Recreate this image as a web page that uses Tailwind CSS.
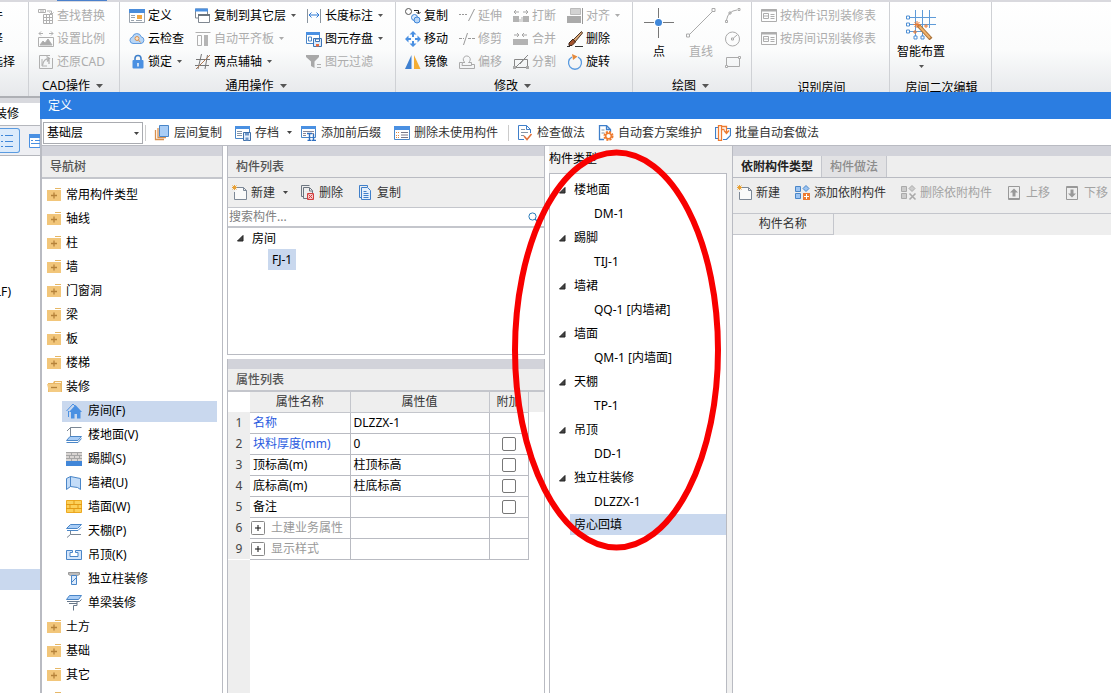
<!DOCTYPE html>
<html lang="zh-CN">
<head>
<meta charset="utf-8">
<title>定义</title>
<script src="https://cdn.jsdelivr.net/npm/@tailwindcss/browser@4"></script>
</head>
<body class="relative flex h-screen flex-col overflow-hidden bg-white font-['Noto_Sans','Noto_Sans_CJK_SC',sans-serif] text-xs leading-5 text-black">

<svg class="hidden" aria-hidden="true">
  <symbol id="caret" viewBox="0 0 7 4"><path d="M0 0h7L3.500 4z" fill="currentColor"/></symbol>
  <symbol id="tri" viewBox="0 0 7 7"><path d="M6 .5V6H.5z" fill="#444" stroke="#222"/></symbol>
  <symbol id="find" viewBox="0 0 16 16" fill="none" stroke="#b0b0b0"><path d="M.5 1.500h7v3h-7zM3 1.500v3M5 1.500v3M9 3h4.500v3M11.500 4.500l2 2 2-2M5.500 6.500h9v9h-9zM5.500 9.500h9M5.500 12.500h9M8.500 7v8M11.500 7v8"/></symbol>
  <symbol id="scale" viewBox="0 0 16 16" fill="none" stroke="#b0b0b0"><path d="M1 2.500h4M3 .5l-2 2 2 2M11 2.500h4M13 .5l2 2-2 2M.5 6.500h15v9H.5z"/><path d="M2 14l3-4 2 2 3-4 4 6z" fill="#aaa"/></symbol>
  <symbol id="restore" viewBox="0 0 16 16" fill="none" stroke="#b0b0b0"><path d="M12 1.500H1.500v13h13V4M4 5v7h5" /><path d="M4.500 11.500C5 7 8 4.500 11 4.500M8.500 2.500L11.500 4.500 9 7.500M11 5v5" stroke-width="1.300"/></symbol>
  <symbol id="define" viewBox="0 0 16 16"><path d="M.5 1.500h15v13H.5z" fill="#fff" stroke="#9aa3ad"/><path d="M0 1h16v4H0z" fill="#4a8ddb"/><path d="M2 7.500h4M2 9.500h4M2 12.500h3M7 12.500h6" stroke="#9aa3ad"/><path d="M8 7h5v4H8z" fill="#f3a73f"/></symbol>
  <symbol id="cloud" viewBox="0 0 16 16"><path d="M4 12.500a3.300 3.300 0 0 1-.5-6.500 4.500 4.500 0 0 1 8.700-.2A3.400 3.400 0 0 1 12 12.500z" fill="#b9d6f5" stroke="#5f9be0"/><circle cx="8" cy="7.500" r="2" fill="#fbe3c8" stroke="#d9904e"/><path d="M9.500 9l2 2.500" stroke="#d9904e"/></symbol>
  <symbol id="lock" viewBox="0 0 16 16"><path d="M6 7V4.500a3 3 0 0 1 6 0V7" fill="none" stroke="#3e7fca" stroke-width="1.600"/><rect x="3.500" y="6" width="11" height="8.500" rx="1" fill="#4a90e2"/><path d="M8.300 9h1.400v3.500H8.300z" fill="#fff"/></symbol>
  <symbol id="copyfloor" viewBox="0 0 16 16"><path d="M.5 1h12v9H.5z" fill="#fff" stroke="#7f8790"/><path d="M0 .5h13v3H0z" fill="#4a90e2"/><path d="M3.500 6.500h11v8h-11z" fill="#fff" stroke="#7f8790"/><path d="M3 6h12v2H3z" fill="#6a747e"/></symbol>
  <symbol id="slab" viewBox="0 0 16 16"><path d="M.5 1.500h15M2.500 4.500h4v10h-4z" fill="none" stroke="#b0b0b0"/><path d="M9 4h4v11H9z" fill="#b5b5b5"/></symbol>
  <symbol id="axis" viewBox="0 0 16 16" fill="none"><path d="M1 5.500h14M0 11.500h14M6.500 0L3 15M12.500 1L10 15" stroke="#777"/><path d="M1 15L15 1" stroke="#b07a56"/></symbol>
  <symbol id="dim" viewBox="0 0 16 16" fill="none"><path d="M1.500 1v14M14.500 1v14" stroke="#8a949e"/><path d="M3 7h10M5.500 4.500L3 7l2.500 2.500M10.500 4.500L13 7l-2.500 2.500" stroke="#2f7ad6"/></symbol>
  <symbol id="save" viewBox="0 0 16 16"><path d="M.5 1.500h13v11H.5z" fill="#fff" stroke="#4a86c8"/><path d="M0 1h14v3H0z" fill="#4a90e2"/><path d="M2.500 6h3v4h-3z" fill="none" stroke="#4a86c8"/><path d="M7.500 7.500h8v8h-8z" fill="#dceafb" stroke="#3c74b5"/><path d="M9.500 8h4v2.500h-4z" fill="#fff" stroke="#3c74b5"/><path d="M10 13h3v2.500h-3z" fill="#ea6b3a"/></symbol>
  <symbol id="filter" viewBox="0 0 16 16"><path d="M0 1h13v2L8.500 7.500V14L5 12V7.500L0 3z" fill="#a8a8a8"/><path d="M11 10.500h4M11 13.500h4" stroke="#b0b0b0"/></symbol>
  <symbol id="copy2" viewBox="0 0 16 16" fill="none"><circle cx="3.500" cy="3.500" r="3" stroke="#555"/><path d="M9 2.500h4.500v3M11.500 4l2 2 2-2" stroke="#222"/><circle cx="9.500" cy="9.500" r="3" fill="#dbeafb" stroke="#3c84d8"/><circle cx="12" cy="12" r="3" fill="#b8d6f7" stroke="#3c84d8"/></symbol>
  <symbol id="move" viewBox="0 0 16 16"><path d="M8 0l3.500 3.500H9V6H7V3.500H4.500zM8 16l-3.500-3.500H7V10h2v2.500h2.500zM0 8l3.500-3.500V7H6v2H3.500v2.500zM16 8l-3.500 3.500V9H10V7h2.500V4.500z" fill="#4a90e2"/></symbol>
  <symbol id="mirror" viewBox="0 0 16 16"><path d="M6.500 1v14H0z" fill="#3f80d0"/><path d="M9 1v14h6.500z" fill="#f5ad32"/></symbol>
  <symbol id="extend" viewBox="0 0 16 16" fill="none" stroke="#999"><path d="M0 6.500h9" stroke-dasharray="2 1"/><path d="M15.500 1L9.500 13"/></symbol>
  <symbol id="trim" viewBox="0 0 16 16" fill="none" stroke="#999"><path d="M0 7.500h5M9 7.500h7" stroke-dasharray="3 1"/><path d="M8.500 2L4.500 14"/></symbol>
  <symbol id="offset" viewBox="0 0 16 16" fill="none" stroke="#aaa"><path d="M3.500 8.500H.5v6h15v-4h-3M3 11.500h9.500v-3h-3A3.500 3.500 0 1 0 6 8.500H3.500z"/></symbol>
  <symbol id="break" viewBox="0 0 16 16"><path d="M0 8h6v6H0zM10 8h6v6h-6zM6.500 11h1v3h-1zM8.500 9h1v5h-1z" fill="#b3b3b3"/><path d="M1 4h5M3 2L1 4l2 2M10 4h5M13 2l2 2-2 2" fill="none" stroke="#a5a5a5"/></symbol>
  <symbol id="merge" viewBox="0 0 16 16"><path d="M0 8h15v6H0z" fill="#b3b3b3"/><path d="M1 4h5M4 2l2 2-2 2M9 4h5M11 2L9 4l2 2" fill="none" stroke="#a5a5a5"/></symbol>
  <symbol id="split" viewBox="0 0 16 16" fill="none" stroke="#888"><path d="M1.500 5.500h13v8h-13zM3 13L15 1M7 10l6-7"/><path d="M0 12h3v3H0zM13 12h3v3h-3z" fill="#aaa" stroke="none"/></symbol>
  <symbol id="align" viewBox="0 0 16 16"><path d="M3.500.5h10v6h-10z" fill="#d2d2d2" stroke="#bbb"/><path d="M0 8h14v7H0z" fill="#aaa"/><path d="M15.500 0v16" stroke="#999"/></symbol>
  <symbol id="brush" viewBox="0 0 16 16"><path d="M14.500.5L6 9l2 2 7.500-9z" fill="#d8a777" stroke="#4d3526"/><path d="M6 8L2 12v2.500h3L8.500 11z" fill="#a3542e" stroke="#3c2418"/><path d="M0 15.500h3M8 15.500h8" stroke="#333"/></symbol>
  <symbol id="rotate" viewBox="0 0 16 16"><path d="M5 3a6.500 6.500 0 1 0 6 0" fill="none" stroke="#5a9be0" stroke-width="1.300"/><path d="M5 0l5.500 2.500L6 6z" fill="#e38a3e"/></symbol>
  <symbol id="point" viewBox="0 0 30 30"><path d="M14.500 0v30M0 14.500h30" stroke="#777"/><circle cx="14.500" cy="14.500" r="4.500" fill="#fff"/><circle cx="14.500" cy="14.500" r="3.500" fill="#3f87d9"/></symbol>
  <symbol id="line" viewBox="0 0 30 30" fill="none" stroke="#aaa"><path d="M3.500 26.500L26 4M.5 26h3v3h-3zM26 .5h3v3h-3z"/></symbol>
  <symbol id="arc" viewBox="0 0 16 16" fill="none" stroke="#aaa"><path d="M1.500 12Q3 3 12 2M.5 12.500h2v2h-2zM13 .5h2v2h-2zM4 4h2v2H4z"/></symbol>
  <symbol id="circle" viewBox="0 0 16 16" fill="none" stroke="#aaa"><circle cx="7.500" cy="8" r="7"/><path d="M8.500 7L12 4M6.500 7h2v2h-2z"/></symbol>
  <symbol id="rect" viewBox="0 0 16 16" fill="none" stroke="#aaa"><path d="M1.500 3.500h13v9h-13z"/><path d="M.5 11.500h2v2h-2zM13.500 2.500h2v2h-2z" fill="#fff"/></symbol>
  <symbol id="card" viewBox="0 0 16 16" fill="none" stroke="#adadad"><path d="M.5 1.500h15v12H.5z"/><path d="M0 2.500h16" stroke-width="2"/><path d="M2.500 5.500h5v5h-5zM3 8h4M9.500 6.500h4M9.500 8.500h4M9.500 10.500h4"/></symbol>
  <symbol id="smart" viewBox="0 0 30 30" fill="none"><path d="M9.500 0v29M16.500 0v29M23.500 0v18M3 7.500h27M3 14.500h27M3 21.500h15" stroke="#5f9bd8"/><path d="M.5 6h3v3h-3zM.5 13h3v3h-3zM.5 20h3v3h-3zM8 26h3v3H8zM15 26h3v3h-3z" fill="#fff" stroke="#4e8fd4"/><path d="M12 15l13 14" stroke="#a97137" stroke-width="4"/><path d="M13 16l11 12" stroke="#f0b26c" stroke-width="2"/><path d="M11 11v7M7.500 14.500h7M8.500 12l5 5M13.500 12l-5 5M9 20v4M7 22h4M20 14v4M18 16h4" stroke="#e97b34"/></symbol>

  <symbol id="layers" viewBox="0 0 16 16"><path d="M1.500 5v9.500H10M4 3v9.500h8" fill="none" stroke="#d9904e" stroke-width="1.300"/><path d="M5.500.5h9v11h-9z" fill="#a9cdf6" stroke="#4a86c8"/></symbol>
  <symbol id="archive" viewBox="0 0 16 16"><path d="M.5 1.500h14v12H.5z" fill="#fff" stroke="#4a86c8"/><path d="M0 1h15v3H0z" fill="#4a90e2"/><path d="M2 6.500h5M2 8.500h5M2 10.500h5" stroke="#8494a6"/><path d="M8.500 7.500h7v8h-7z" fill="#e4effc" stroke="#3f6fa8"/><path d="M10 8h4v2.500h-4zM10.500 12.500h3v3h-3z" fill="#6f97c9"/></symbol>
  <symbol id="affix" viewBox="0 0 16 16"><path d="M.5 1.500h14v11H.5z" fill="#fff" stroke="#4a86c8"/><path d="M0 1h15v3H0z" fill="#4a90e2"/><path d="M2 6.500h11M2 8.500h3M11 8.500h2M2 10.500h3" stroke="#889"/><path d="M6 8.500h5M8.500 8v7M6.500 15.500h4M12.500 9v6M11 15.500h4" stroke="#2f6fc0" stroke-width="1.400"/></symbol>
  <symbol id="unused" viewBox="0 0 16 16"><path d="M.5 1.500h15v13H.5z" fill="#fff" stroke="#4a86c8"/><path d="M0 1h16v4H0z" fill="#4a90e2"/><path d="M2 7.500h3M2 10.500h3M2 12.500h3" stroke="#e38a3e" stroke-dasharray="1 1"/><path d="M7 7.500h7M7 10h7M7 12.500h7" stroke="#778"/></symbol>
  <symbol id="check" viewBox="0 0 16 16" fill="none"><path d="M13.500 8V4.500l-4-4h-8v14H7M9.500.5v4h4" stroke="#3f7fca"/><path d="M4 4.500h4M4 7.500h7M4 10.500h3" stroke="#8494a6"/><path d="M7 11l3 3.500L14.500 9" stroke="#e0703a" stroke-width="1.500"/></symbol>
  <symbol id="gear" viewBox="0 0 16 16" fill="none"><path d="M12.500 7V4.500l-4-4h-7v14H6M8.500.5v4h4" stroke="#3f7fca" stroke-width="1.300"/><path d="M3.500 5h3M3.500 8h3" stroke="#8494a6"/><circle cx="10.500" cy="11" r="4" stroke="#ee7b30" stroke-width="2" stroke-dasharray="2 1.140"/><circle cx="10.500" cy="11" r="2.800" stroke="#ee7b30" stroke-width="1.500"/></symbol>
  <symbol id="batch" viewBox="0 0 16 16" fill="none"><path d="M3 2.500H.5v11h3M12 3.500h3.500v7l-4 4H8" stroke="#3f7fca" stroke-width="1.200"/><path d="M3.500.5h3v15h-3zM6.500 1.500h5v6M9 5.500l2.500 3 2.500-3M6.500 12V4.500h3" stroke="#ee7b30" stroke-width="1.300"/></symbol>
  <symbol id="new" viewBox="0 0 16 16" fill="none"><path d="M5 2.500h6.500l3 3v9h-12V7M11.500 2.500v3h3" fill="#fafafa" stroke="#7d8896"/><path d="M0 2.500h5M2.500 0v5M.5.5l4 4M4.500.5l-4 4" stroke="#e8a136"/></symbol>
  <symbol id="del" viewBox="0 0 16 16" fill="none"><path d="M3 11.500H1.500V.5h8M7 13.500H3.500v-11h6l3 3V8M9.500 3v3h3" stroke="#6d7681"/><path d="M7.500 8.500h6v6h-6z" fill="#f6c9c9" stroke="#d23f3f"/><path d="M8.500 9.500l4 4M12.500 9.500l-4 4" stroke="#d23f3f"/></symbol>
  <symbol id="dup" viewBox="0 0 16 16" fill="none" stroke="#3f7fca"><path d="M3 12.500H1.500V.5h8V2"/><path d="M3.500 2.500h6l3 3v9h-9z" fill="#e4effc"/><path d="M5.500 6.500h3M5.500 8.500h5M5.500 10.500h5M5.500 12.500h5"/></symbol>
  <symbol id="addc" viewBox="0 0 16 16"><path d="M.5 1.500h5v5h-5zM.5 8.500h5v5h-5zM11 .5L14 3.500l-3 3-3-3z" fill="#9cc4f2" stroke="#4a86c8"/><path d="M8 8h7v7H8z" fill="#ee7b30"/><path d="M11.500 9v5M9 11.500h5" stroke="#fff"/></symbol>
  <symbol id="delc" viewBox="0 0 16 16"><path d="M.5 1.500h5v5h-5zM.5 8.500h5v5h-5zM11 .5L14 3.500l-3 3-3-3z" fill="#ccc" stroke="#aaa"/><path d="M8.500 8.500l6 6M14.500 8.500l-6 6" stroke="#aaa" stroke-width="1.600"/></symbol>
  <symbol id="up" viewBox="0 0 14 16"><path d="M1.500 1.500h11v13h-11zM1 13.500h12" fill="none" stroke="#999"/><path d="M7 3.500l4 4H8.500v4h-3v-4H3z" fill="#999"/></symbol>
  <symbol id="down" viewBox="0 0 14 16"><path d="M1.500 1.500h11v13h-11zM1 2.500h12" fill="none" stroke="#999"/><path d="M7 12.500l4-4H8.500v-4h-3v4H3z" fill="#999"/></symbol>
  <symbol id="search" viewBox="0 0 10 10" fill="none" stroke="#2b7bb9"><circle cx="4.500" cy="4.500" r="3.600"/><path d="M7 7l2.500 2.500" stroke-width="1.300"/></symbol>

  <symbol id="folder" viewBox="0 0 16 14"><path d="M8 0h6v1H8z" fill="#e6b766"/><path d="M0 2h14v11H0z" fill="#f2c67a"/><path d="M4 7.500h6M7 4.500v6" stroke="#b5823a" stroke-width="1.300"/></symbol>
  <symbol id="open" viewBox="0 0 16 14"><path d="M1 12V3h5l1-2h8v11z" fill="#e9b765"/><path d="M8 2h6v1H8z" fill="#fff3da"/><path d="M0 4h13l1 8H2z" fill="#f4cb83"/><path d="M4 7.500h6" stroke="#b5823a" stroke-width="1.300"/></symbol>
  <symbol id="house" viewBox="0 0 16 16"><path d="M.5 8L7 1l2 2M2.500 8v6" fill="none" stroke="#4a90e2"/><path d="M9.500 2L16 9h-1.500v6.500h-3.500V11H8.500v4.500H5V9H3z" fill="#4a90e2"/></symbol>
  <symbol id="floor" viewBox="0 0 16 16"><path d="M4.500 9V.500h11M4.500 .5L1 4" fill="none" stroke="#7b8794"/><path d="M4 9.500h11.500L12 13.500H.5z" fill="#a9cdf6" stroke="#4a86c8"/><path d="M.5 15.500H12l3.500-4" fill="none" stroke="#4a86c8"/></symbol>
  <symbol id="skirt" viewBox="0 0 16 16"><path d="M0 1h16v9H0z" fill="#d8d4d2"/><path d="M0 1.500h16M0 4.500h16M0 7.500h16M5.500 1v3M11.500 1v3M3.500 4v3M8.500 4v3M13.500 4v3M5.500 8v3M11.500 8v3" stroke="#a5a5a5"/><path d="M0 10h16v5H0z" fill="#4186d8"/></symbol>
  <symbol id="dado" viewBox="0 0 16 16"><path d="M.5 3.500L4.500 1.500v10l-4 3zM4.500 1.500l10 2v11l-3-2-7-1z" fill="#c3dcf8" stroke="#4a86c8"/></symbol>
  <symbol id="brick" viewBox="0 0 16 16"><path d="M.5 1.500h15v12H.5z" fill="#fcd05a" stroke="#eda921"/><path d="M0 5.500h16M0 9.500h16M8 1.500v4M4 5.500v4M12 5.500v4M8 9.500v4" stroke="#e39a14"/></symbol>
  <symbol id="ceil" viewBox="0 0 16 16"><path d="M4.500 1.500h11l-4 4H.5z" fill="#a9cdf6" stroke="#4a86c8"/><path d="M1 7.500h11l3-3" fill="none" stroke="#4a86c8"/><path d="M4.500 8v3.500L1 14.500M4.500 11.500H15" fill="none" stroke="#7b8794"/></symbol>
  <symbol id="susp" viewBox="0 0 16 16"><path d="M.5 3.500h6v2H4v4h8v-4H9.500v-2h6v9H.5z" fill="#d5e6fb" stroke="#4a86c8"/></symbol>
  <symbol id="pillar" viewBox="0 0 16 16"><path d="M2.500 1.500h11v2l-2 1h-7l-2-1z" fill="#bbb" stroke="#999"/><path d="M5.500 4.500h5v9h-5z" fill="#dceafb" stroke="#4a86c8"/><path d="M6 11l4-4" stroke="#4a86c8"/></symbol>
  <symbol id="beam" viewBox="0 0 16 16"><path d="M3.500.5h12l-3 4H.5z" fill="#a9cdf6" stroke="#4a86c8"/><path d="M1 6.500h12.500l2-2M3 8.500h8M11 6.500v4H7.500v5" fill="none" stroke="#68788a"/></symbol>
</svg>

<!-- Main window ribbon -->
<header class="flex h-[98px] shrink-0 border-t-2 border-b-2 border-t-[#d9d9de] border-b-[#aeb0b5] bg-linear-to-b from-white via-[#fbfcfc] to-[#e6e8eb] whitespace-nowrap">
  <div class="absolute top-0 left-[57px] h-px w-[50px] bg-[#4a80cc]"></div>
  <section class="w-[29px] shrink-0 overflow-hidden border-r border-[#cfd1d5] pt-[2px]">
    <button class="flex h-[23px] w-[3px] items-center justify-end">构件</button>
    <button class="flex h-[23px] w-[3px] items-center justify-end">选择</button>
    <button class="flex h-[23px] w-[15px] items-center justify-end">选择</button>
  </section>
  <section class="w-[91px] shrink-0 border-r border-[#cfd1d5] pt-[2px] pl-[9px] text-[#acacac]">
    <button class="flex h-[23px] items-center gap-[3px]"><svg class="size-4"><use href="#find"/></svg>查找替换</button>
    <button class="flex h-[23px] items-center gap-[3px]"><svg class="size-4"><use href="#scale"/></svg>设置比例</button>
    <button class="flex h-[23px] items-center gap-[3px]"><svg class="size-4"><use href="#restore"/></svg>还原CAD</button>
    <button class="mt-px flex h-[23px] items-center gap-[6px] pl-1 text-black">CAD操作<svg class="h-1 w-[7px] text-[#555]"><use href="#caret"/></svg></button>
  </section>
  <section class="w-[276px] shrink-0 border-r border-[#cfd1d5] pt-[2px] pl-[9px]">
    <div class="grid grid-cols-[66px_111px_auto]">
      <button class="flex h-[23px] items-center gap-[3px]"><svg class="size-4"><use href="#define"/></svg>定义</button>
      <button class="flex h-[23px] items-center gap-[3px]"><svg class="size-4"><use href="#copyfloor"/></svg>复制到其它层<svg class="ml-[2px] h-[3px] w-[5px] text-[#555]"><use href="#caret"/></svg></button>
      <button class="flex h-[23px] items-center gap-[3px]"><svg class="size-4"><use href="#dim"/></svg>长度标注<svg class="ml-[2px] h-[3px] w-[5px] text-[#555]"><use href="#caret"/></svg></button>
      <button class="flex h-[23px] items-center gap-[3px]"><svg class="size-4"><use href="#cloud"/></svg>云检查</button>
      <button class="flex h-[23px] items-center gap-[3px] text-[#acacac]"><svg class="size-4"><use href="#slab"/></svg>自动平齐板<svg class="ml-[2px] h-[3px] w-[5px]"><use href="#caret"/></svg></button>
      <button class="flex h-[23px] items-center gap-[3px]"><svg class="size-4"><use href="#save"/></svg>图元存盘<svg class="ml-[2px] h-[3px] w-[5px] text-[#555]"><use href="#caret"/></svg></button>
      <button class="flex h-[23px] items-center gap-[3px]"><svg class="size-4"><use href="#lock"/></svg>锁定<svg class="ml-[2px] h-[3px] w-[5px] text-[#555]"><use href="#caret"/></svg></button>
      <button class="flex h-[23px] items-center gap-[3px]"><svg class="size-4"><use href="#axis"/></svg>两点辅轴<svg class="ml-[2px] h-[3px] w-[5px] text-[#555]"><use href="#caret"/></svg></button>
      <button class="flex h-[23px] items-center gap-[3px] text-[#acacac]"><svg class="size-4"><use href="#filter"/></svg>图元过滤</button>
    </div>
    <div class="mt-px flex justify-center pr-3"><button class="flex h-[23px] items-center gap-[6px]">通用操作<svg class="h-1 w-[7px] text-[#555]"><use href="#caret"/></svg></button></div>
  </section>
  <section class="w-[237px] shrink-0 border-r border-[#cfd1d5] pt-[2px] pl-[9px]">
    <div class="grid grid-cols-[54px_54px_54px_auto]">
      <button class="flex h-[23px] items-center gap-[3px]"><svg class="size-4"><use href="#copy2"/></svg>复制</button>
      <button class="flex h-[23px] items-center gap-[3px] text-[#acacac]"><svg class="size-4"><use href="#extend"/></svg>延伸</button>
      <button class="flex h-[23px] items-center gap-[3px] text-[#acacac]"><svg class="size-4"><use href="#break"/></svg>打断</button>
      <button class="flex h-[23px] items-center gap-[3px] text-[#acacac]"><svg class="size-4"><use href="#align"/></svg>对齐<svg class="ml-[2px] h-[3px] w-[5px]"><use href="#caret"/></svg></button>
      <button class="flex h-[23px] items-center gap-[3px]"><svg class="size-4"><use href="#move"/></svg>移动</button>
      <button class="flex h-[23px] items-center gap-[3px] text-[#acacac]"><svg class="size-4"><use href="#trim"/></svg>修剪</button>
      <button class="flex h-[23px] items-center gap-[3px] text-[#acacac]"><svg class="size-4"><use href="#merge"/></svg>合并</button>
      <button class="flex h-[23px] items-center gap-[3px]"><svg class="size-4"><use href="#brush"/></svg>删除</button>
      <button class="flex h-[23px] items-center gap-[3px]"><svg class="size-4"><use href="#mirror"/></svg>镜像</button>
      <button class="flex h-[23px] items-center gap-[3px] text-[#acacac]"><svg class="size-4"><use href="#offset"/></svg>偏移</button>
      <button class="flex h-[23px] items-center gap-[3px] text-[#acacac]"><svg class="size-4"><use href="#split"/></svg>分割</button>
      <button class="flex h-[23px] items-center gap-[3px]"><svg class="size-4"><use href="#rotate"/></svg>旋转</button>
    </div>
    <div class="mt-px flex justify-center pr-3"><button class="flex h-[23px] items-center gap-[6px]">修改<svg class="h-1 w-[7px] text-[#555]"><use href="#caret"/></svg></button></div>
  </section>
  <section class="w-[119px] shrink-0 border-r border-[#cfd1d5] pt-[2px] pl-[11px]">
    <div class="flex h-[69px]">
      <button class="flex w-[30px] flex-col items-center gap-1 pt-1"><svg class="size-[30px]"><use href="#point"/></svg>点</button>
      <button class="ml-3 flex w-[30px] flex-col items-center gap-1 pt-1 text-[#acacac]"><svg class="size-[30px]"><use href="#line"/></svg>直线</button>
      <div class="ml-[9px] flex w-4 flex-col">
        <button class="flex h-[23px] items-center" aria-label="弧"><svg class="size-4"><use href="#arc"/></svg></button>
        <button class="flex h-[23px] items-center" aria-label="圆"><svg class="size-4"><use href="#circle"/></svg></button>
        <button class="flex h-[23px] items-center" aria-label="矩形"><svg class="size-4"><use href="#rect"/></svg></button>
      </div>
    </div>
    <button class="mt-px flex h-[23px] items-center gap-[6px] pl-7">绘图<svg class="h-1 w-[7px] text-[#555]"><use href="#caret"/></svg></button>
  </section>
  <section class="w-[138px] shrink-0 border-r border-[#cfd1d5] pt-[2px] pl-[9px]">
    <div class="h-[72px] text-[#acacac]">
      <button class="flex h-[23px] items-center gap-[3px]"><svg class="size-4"><use href="#card"/></svg>按构件识别装修表</button>
      <button class="flex h-[23px] items-center gap-[3px]"><svg class="size-4"><use href="#card"/></svg>按房间识别装修表</button>
    </div>
    <div class="h-[23px] pr-[7px] text-center leading-[23px]">识别房间</div>
  </section>
  <section class="w-[102px] shrink-0 border-r border-[#cfd1d5] pt-[2px]">
    <div class="h-[72px] pl-[7px]">
      <button class="flex flex-col items-center pt-[6px]"><svg class="size-[30px]"><use href="#smart"/></svg><span class="mt-[2px]">智能布置</span><svg class="mt-[3px] h-[3px] w-[5px] text-[#555]"><use href="#caret"/></svg></button>
    </div>
    <div class="h-[23px] pl-[2px] text-center leading-[23px]">房间二次编辑</div>
  </section>
</header>

<!-- Visible strip of the main window behind the dialog -->
<aside class="min-h-0 w-10 flex-1 overflow-hidden">
  <div class="h-[5px] bg-[#d8d9de]"></div>
  <div class="flex h-[22px] w-[19px] items-center justify-end whitespace-nowrap">装修</div>
  <div class="flex h-[31px] items-center justify-between border-y border-[#b5b7bd] bg-[#eeeff3]">
    <button class="flex h-[25px] w-5 items-center justify-end rounded-r-[3px] border border-l-0 border-[#5a9be0] bg-[#dcebfb] pr-[5px]" aria-label="列表"><svg class="h-4 w-[14px]" viewBox="0 0 14 16" fill="none" stroke="#3f87d9"><path d="M1 2.500h2M5 2.500h8M1 8.500h2M5 8.500h8M1 13.500h2M5 13.500h8"/></svg></button>
    <svg class="h-[14px] w-[11px]" viewBox="0 0 11 14"><path d="M.5.5H11v13H.5z" fill="#fff" stroke="#4a90e2"/><path d="M0 0h11v4H0zM2 6h2v1H2zM6 6h5v1H6zM2 9h9v1H2z" fill="#4a90e2"/></svg>
  </div>
  <div class="mt-[126px] flex h-5 w-[11px] items-center justify-end whitespace-nowrap">(LF)</div>
  <div class="mt-[267px] h-[21px] bg-[#c9d8ee]"></div>
</aside>

<!-- Definition dialog -->
<main class="absolute top-[92px] right-0 bottom-0 left-10 flex flex-col overflow-hidden bg-white">
  <h1 class="h-[27px] shrink-0 bg-[#2b7de1] pl-2 leading-[27px] text-white">定义</h1>
  <div class="flex h-[27px] shrink-0 items-center border-b border-l-2 border-[#b9bbc2] pt-px pl-[1px] whitespace-nowrap text-[#333]">
    <div class="relative">
      <select aria-label="楼层" class="block h-[22px] w-[100px] appearance-none border border-[#a9abb0] bg-white pl-[3px] text-xs leading-5 text-black"><option>基础层</option></select>
      <svg class="pointer-events-none absolute top-[10px] right-1 h-[3px] w-[5px] text-[#444]"><use href="#caret"/></svg>
    </div>
    <div class="ml-[2px] h-4 w-px bg-[#ccc]"></div>
    <button class="ml-2 flex items-center gap-1"><svg class="size-4"><use href="#layers"/></svg>层间复制</button>
    <button class="ml-[13px] flex items-center gap-1"><svg class="size-4"><use href="#archive"/></svg>存档<svg class="ml-1 h-[3px] w-[5px] text-[#444]"><use href="#caret"/></svg></button>
    <button class="ml-[9px] flex items-center gap-1"><svg class="size-4"><use href="#affix"/></svg>添加前后缀</button>
    <button class="ml-[13px] flex items-center gap-1"><svg class="size-4"><use href="#unused"/></svg>删除未使用构件</button>
    <div class="ml-[10px] h-4 w-px bg-[#ccc]"></div>
    <button class="ml-2 flex items-center gap-1"><svg class="size-4"><use href="#check"/></svg>检查做法</button>
    <button class="ml-[13px] flex items-center gap-1"><svg class="size-4"><use href="#gear"/></svg>自动套方案维护</button>
    <button class="ml-[13px] flex items-center gap-1"><svg class="size-4"><use href="#batch"/></svg>批量自动套做法</button>
  </div>

  <div class="flex min-h-0 flex-1 border-l-2 border-[#b9bbc2]">
    <!-- Navigation tree -->
    <nav class="w-[181px] shrink-0 overflow-hidden border-r border-[#b9bbc2] whitespace-nowrap">
      <div class="h-[10px] bg-[#d2d3da]"></div>
      <h2 class="h-[23px] border-b-2 border-[#c4c6cc] bg-[#eee] pl-2 leading-[21px] font-medium text-[#555]">导航树</h2>
      <ul class="pt-1">
        <li class="flex h-6 items-center gap-[3px] pl-[5px]"><svg class="h-[14px] w-4"><use href="#folder"/></svg>常用构件类型</li>
        <li class="flex h-6 items-center gap-[3px] pl-[5px]"><svg class="h-[14px] w-4"><use href="#folder"/></svg>轴线</li>
        <li class="flex h-6 items-center gap-[3px] pl-[5px]"><svg class="h-[14px] w-4"><use href="#folder"/></svg>柱</li>
        <li class="flex h-6 items-center gap-[3px] pl-[5px]"><svg class="h-[14px] w-4"><use href="#folder"/></svg>墙</li>
        <li class="flex h-6 items-center gap-[3px] pl-[5px]"><svg class="h-[14px] w-4"><use href="#folder"/></svg>门窗洞</li>
        <li class="flex h-6 items-center gap-[3px] pl-[5px]"><svg class="h-[14px] w-4"><use href="#folder"/></svg>梁</li>
        <li class="flex h-6 items-center gap-[3px] pl-[5px]"><svg class="h-[14px] w-4"><use href="#folder"/></svg>板</li>
        <li class="flex h-6 items-center gap-[3px] pl-[5px]"><svg class="h-[14px] w-4"><use href="#folder"/></svg>楼梯</li>
        <li class="flex h-6 items-center gap-[3px] pl-[5px]"><svg class="h-[14px] w-4"><use href="#open"/></svg>装修</li>
        <li class="flex h-6 items-center pr-[5px] pl-5"><span class="flex h-[21px] flex-1 items-center gap-[6px] bg-[#c9d8ee] pl-1"><svg class="size-4"><use href="#house"/></svg>房间(F)</span></li>
        <li class="flex h-6 items-center gap-[6px] pl-6"><svg class="size-4"><use href="#floor"/></svg>楼地面(V)</li>
        <li class="flex h-6 items-center gap-[6px] pl-6"><svg class="size-4"><use href="#skirt"/></svg>踢脚(S)</li>
        <li class="flex h-6 items-center gap-[6px] pl-6"><svg class="size-4"><use href="#dado"/></svg>墙裙(U)</li>
        <li class="flex h-6 items-center gap-[6px] pl-6"><svg class="size-4"><use href="#brick"/></svg>墙面(W)</li>
        <li class="flex h-6 items-center gap-[6px] pl-6"><svg class="size-4"><use href="#ceil"/></svg>天棚(P)</li>
        <li class="flex h-6 items-center gap-[6px] pl-6"><svg class="size-4"><use href="#susp"/></svg>吊顶(K)</li>
        <li class="flex h-6 items-center gap-[6px] pl-6"><svg class="size-4"><use href="#pillar"/></svg>独立柱装修</li>
        <li class="flex h-6 items-center gap-[6px] pl-6"><svg class="size-4"><use href="#beam"/></svg>单梁装修</li>
        <li class="flex h-6 items-center gap-[3px] pl-[5px]"><svg class="h-[14px] w-4"><use href="#folder"/></svg>土方</li>
        <li class="flex h-6 items-center gap-[3px] pl-[5px]"><svg class="h-[14px] w-4"><use href="#folder"/></svg>基础</li>
        <li class="flex h-6 items-center gap-[3px] pl-[5px]"><svg class="h-[14px] w-4"><use href="#folder"/></svg>其它</li>
        <li class="flex h-6 items-center gap-[3px] pl-[5px]"><svg class="h-[14px] w-4"><use href="#folder"/></svg></li>
      </ul>
    </nav>

    <!-- Component list and properties -->
    <div class="ml-1 flex w-[318px] shrink-0 flex-col whitespace-nowrap">
      <section class="flex h-[209px] shrink-0 flex-col border border-t-0 border-[#b9bbc2]">
        <div class="h-[10px] shrink-0 bg-[#d2d3da]"></div>
        <h2 class="h-[22px] shrink-0 border-b border-[#b9bbc2] bg-[#eee] pl-2 leading-[21px] font-medium text-[#555]">构件列表</h2>
        <div class="flex h-[30px] shrink-0 items-center border-b border-[#c4c6cc] bg-[#eee] pl-1 text-[#333]">
          <button class="flex items-center gap-[3px]"><svg class="size-4"><use href="#new"/></svg>新建<svg class="ml-[5px] h-[3px] w-[5px] text-[#444]"><use href="#caret"/></svg></button>
          <button class="ml-3 flex items-center gap-[3px]"><svg class="size-4"><use href="#del"/></svg>删除</button>
          <button class="ml-[15px] flex items-center gap-[3px]"><svg class="size-4"><use href="#dup"/></svg>复制</button>
        </div>
        <label class="flex h-5 shrink-0 items-center border-b-2 border-[#c4c6cc] pr-[6px]">
          <input type="text" aria-label="搜索构件" placeholder="搜索构件..." class="min-w-0 flex-1 pl-px leading-[18px] outline-none placeholder:text-[#808080]">
          <svg class="size-[10px]"><use href="#search"/></svg>
        </label>
        <ul>
          <li class="flex h-[21px] items-center gap-2 pl-[9px]"><svg class="size-[7px]"><use href="#tri"/></svg>房间</li>
          <li class="flex h-[21px] pl-10"><span class="bg-[#c9d8ee] px-1 leading-[21px]">FJ-1</span></li>
        </ul>
      </section>
      <section class="mt-1 flex min-h-0 flex-1 flex-col border-x border-[#b9bbc2]">
        <div class="h-[10px] shrink-0 bg-[#d2d3da]"></div>
        <h2 class="h-[23px] shrink-0 border-b-2 border-[#c4c6cc] bg-[#eee] pl-2 leading-[21px] font-medium text-[#555]">属性列表</h2>
        <table class="w-full table-fixed border-collapse">
          <colgroup><col class="w-[22px]"><col class="w-[100px]"><col class="w-[139px]"><col class="w-[39px]"><col></colgroup>
          <thead>
            <tr class="h-5 text-[#333]">
              <th class="p-0"></th>
              <th class="border-r border-b border-[#c4c6cc] bg-[#eee] p-0 leading-[19px] font-normal">属性名称</th>
              <th class="border-r border-b border-[#c4c6cc] bg-[#eee] p-0 leading-[19px] font-normal">属性值</th>
              <th class="overflow-hidden border-r border-b border-[#c4c6cc] bg-[#eee] p-0 leading-[19px] font-normal">附加</th>
              <th class="bg-[#eee] p-0"></th>
            </tr>
          </thead>
          <tbody>
            <tr class="h-[21px]"><th class="bg-[#eee] p-0 font-normal text-[#444]">1</th><td class="border border-l-0 border-[#b9bbc2] p-0 pl-[3px] text-[#2a5be0]">名称</td><td class="border border-[#b9bbc2] p-0 pl-[3px]">DLZZX-1</td><td class="border border-[#b9bbc2] p-0"></td><td class="p-0"></td></tr>
            <tr class="h-[21px]"><th class="bg-[#eee] p-0 font-normal text-[#444]">2</th><td class="border border-l-0 border-[#b9bbc2] p-0 pl-[3px] text-[#2a5be0]">块料厚度(mm)</td><td class="border border-[#b9bbc2] p-0 pl-[3px]">0</td><td class="border border-[#b9bbc2] p-0"><input type="checkbox" aria-label="附加 块料厚度" class="mx-auto block size-[14px] appearance-none rounded-[2px] border border-[#777] bg-white"></td><td class="p-0"></td></tr>
            <tr class="h-[21px]"><th class="bg-[#eee] p-0 font-normal text-[#444]">3</th><td class="border border-l-0 border-[#b9bbc2] p-0 pl-[3px]">顶标高(m)</td><td class="border border-[#b9bbc2] p-0 pl-[3px]">柱顶标高</td><td class="border border-[#b9bbc2] p-0"><input type="checkbox" aria-label="附加 顶标高" class="mx-auto block size-[14px] appearance-none rounded-[2px] border border-[#777] bg-white"></td><td class="p-0"></td></tr>
            <tr class="h-[21px]"><th class="bg-[#eee] p-0 font-normal text-[#444]">4</th><td class="border border-l-0 border-[#b9bbc2] p-0 pl-[3px]">底标高(m)</td><td class="border border-[#b9bbc2] p-0 pl-[3px]">柱底标高</td><td class="border border-[#b9bbc2] p-0"><input type="checkbox" aria-label="附加 底标高" class="mx-auto block size-[14px] appearance-none rounded-[2px] border border-[#777] bg-white"></td><td class="p-0"></td></tr>
            <tr class="h-[21px]"><th class="bg-[#eee] p-0 font-normal text-[#444]">5</th><td class="border border-l-0 border-[#b9bbc2] p-0 pl-[3px]">备注</td><td class="border border-[#b9bbc2] p-0"></td><td class="border border-[#b9bbc2] p-0"><input type="checkbox" aria-label="附加 备注" class="mx-auto block size-[14px] appearance-none rounded-[2px] border border-[#777] bg-white"></td><td class="p-0"></td></tr>
            <tr class="h-[21px]"><th class="bg-[#eee] p-0 font-normal text-[#444]">6</th><td class="border border-l-0 border-[#b9bbc2] p-0 pl-px text-[#999]"><button class="flex h-5 items-center gap-[6px]"><svg class="size-[14px]" viewBox="0 0 14 14"><rect x=".5" y=".5" width="13" height="13" rx="1" fill="#fff" stroke="#888"/><path d="M4 7h6M7 4v6" stroke="#111"/></svg>土建业务属性</button></td><td class="border border-[#b9bbc2] p-0"></td><td class="border border-[#b9bbc2] p-0"></td><td class="p-0"></td></tr>
            <tr class="h-[21px]"><th class="bg-[#eee] p-0 font-normal text-[#444]">9</th><td class="border border-l-0 border-[#b9bbc2] p-0 pl-px text-[#999]"><button class="flex h-5 items-center gap-[6px]"><svg class="size-[14px]" viewBox="0 0 14 14"><rect x=".5" y=".5" width="13" height="13" rx="1" fill="#fff" stroke="#888"/><path d="M4 7h6M7 4v6" stroke="#111"/></svg>显示样式</button></td><td class="border border-[#b9bbc2] p-0"></td><td class="border border-[#b9bbc2] p-0"></td><td class="p-0"></td></tr>
          </tbody>
        </table>
        <div class="w-[22px] flex-1 bg-[#eee]"></div>
      </section>
    </div>

    <!-- Component types -->
    <section class="ml-1 flex w-[183px] shrink-0 flex-col bg-[#f0f0f0] pr-[5px] whitespace-nowrap">
      <h2 class="h-[27px] shrink-0 pt-[3px]">构件类型</h2>
      <ul class="flex-1 border border-b-0 border-[#b9bbc2] bg-white pt-1">
        <li class="flex h-6 items-center gap-2 pl-[9px]"><svg class="size-[7px]"><use href="#tri"/></svg>楼地面</li>
        <li class="flex h-6 items-center pl-11">DM-1</li>
        <li class="flex h-6 items-center gap-2 pl-[9px]"><svg class="size-[7px]"><use href="#tri"/></svg>踢脚</li>
        <li class="flex h-6 items-center pl-11">TIJ-1</li>
        <li class="flex h-6 items-center gap-2 pl-[9px]"><svg class="size-[7px]"><use href="#tri"/></svg>墙裙</li>
        <li class="flex h-6 items-center pl-11">QQ-1 [内墙裙]</li>
        <li class="flex h-6 items-center gap-2 pl-[9px]"><svg class="size-[7px]"><use href="#tri"/></svg>墙面</li>
        <li class="flex h-6 items-center pl-11">QM-1 [内墙面]</li>
        <li class="flex h-6 items-center gap-2 pl-[9px]"><svg class="size-[7px]"><use href="#tri"/></svg>天棚</li>
        <li class="flex h-6 items-center pl-11">TP-1</li>
        <li class="flex h-6 items-center gap-2 pl-[9px]"><svg class="size-[7px]"><use href="#tri"/></svg>吊顶</li>
        <li class="flex h-6 items-center pl-11">DD-1</li>
        <li class="flex h-6 items-center gap-2 pl-[9px]"><svg class="size-[7px]"><use href="#tri"/></svg>独立柱装修</li>
        <li class="flex h-6 items-center pl-11">DLZZX-1</li>
        <li class="flex h-6 items-start pl-5"><span class="h-[21px] flex-1 bg-[#c9d8ee] pl-1 leading-[21px]">房心回填</span></li>
      </ul>
    </section>

    <!-- Attached components -->
    <section class="flex min-w-0 flex-1 flex-col overflow-hidden border-l border-[#b9bbc2] whitespace-nowrap">
      <div class="h-[10px] shrink-0 bg-[#d2d3da]"></div>
      <div class="flex h-[22px] shrink-0 border-b border-[#b9bbc2] bg-[#eee]">
        <button class="w-[89px] border-r border-[#c4c6cc] bg-[#f0f0f0] font-bold text-[#222]">依附构件类型</button>
        <button class="w-[65px] border-r border-[#c4c6cc] bg-[#e2e2e4] font-medium text-[#8c8c8c]">构件做法</button>
      </div>
      <div class="flex h-9 shrink-0 items-start border-b border-[#c4c6cc] bg-[#eee] pt-[5px] pl-1 text-[#333]">
        <button class="flex items-center gap-[3px]"><svg class="size-4"><use href="#new"/></svg>新建</button>
        <button class="ml-[15px] flex items-center gap-[3px]"><svg class="size-4"><use href="#addc"/></svg>添加依附构件</button>
        <button class="ml-[15px] flex items-center gap-[3px] text-[#a3a3a3]"><svg class="size-4"><use href="#delc"/></svg>删除依附构件</button>
        <button class="ml-[15px] flex items-center gap-[5px] text-[#a3a3a3]"><svg class="h-4 w-[14px]"><use href="#up"/></svg>上移</button>
        <button class="ml-[15px] flex items-center gap-[5px] text-[#a3a3a3]"><svg class="h-4 w-[14px]"><use href="#down"/></svg>下移</button>
      </div>
      <table class="w-full table-fixed border-collapse bg-[#eee]">
        <thead><tr class="h-5"><th class="w-[100px] border-r border-b border-[#c4c6cc] p-0 leading-5 font-normal text-[#333]">构件名称</th><th class="p-0"></th></tr></thead>
      </table>
    </section>
  </div>
</main>

<!-- Annotation ring over the component types -->
<svg class="pointer-events-none absolute top-[149px] left-[511px] h-[402px] w-[211px]" viewBox="0 0 211 402" fill="none"><ellipse cx="105.500" cy="201" rx="101.500" ry="197.500" stroke="#f80000" stroke-width="6"/></svg>
</body>
</html>
